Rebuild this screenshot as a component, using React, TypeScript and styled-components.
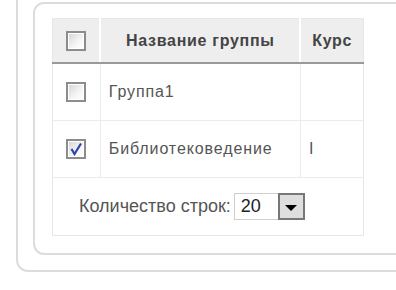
import React from 'react'
import styled, { createGlobalStyle } from 'styled-components'

const GlobalStyle = createGlobalStyle`
  html, body {
    margin: 0;
    padding: 0;
    overflow: hidden;
    background: #ffffff;
    font-family: "Liberation Sans", Arial, sans-serif;
  }
`

const OuterFrame = styled.div`
  width: 600px;
  margin: -20px 0 0 16px;
  padding: 20px 0 15px 15px;
  border: 2px solid #dcdcdc;
  border-radius: 12px;
`

const InnerFrame = styled.div`
  width: 500px;
  padding: 14px 0 17px 17px;
  border: 2px solid #dcdcdc;
  border-radius: 11px;
`

const Table = styled.table`
  width: 312px;
  border-collapse: collapse;
  border: 1px solid #e6e6e6;
  color: #555;
  font-size: 16px;
  letter-spacing: 0.9px;
`

const HeadCell = styled.th<{ $w: number }>`
  width: ${(p) => p.$w}px;
  height: 43px;
  padding: 0;
  background: #eeeeee;
  border-bottom: 2px solid #9a9a9a;
  border-left: 2px solid #ffffff;
  color: #444;
  font-weight: bold;
  letter-spacing: 0.7px;
  text-align: center;
  &:first-child {
    border-left: none;
  }
`

const Cell = styled.td<{ $center?: boolean }>`
  height: 56px;
  padding: 0 0 0 ${(p) => (p.$center ? 0 : 8)}px;
  border-left: 1px solid #ebebeb;
  border-bottom: 1px solid #ebebeb;
  text-align: ${(p) => (p.$center ? 'center' : 'left')};
  &:first-child {
    border-left: none;
  }
`

const FooterCell = styled.td`
  height: 57px;
  padding: 0 0 0 26px;
`

const Pager = styled.div`
  display: flex;
  align-items: center;
  gap: 3px;
  color: #555;
  font-size: 18px;
  letter-spacing: 0;
`

const Box = styled.span`
  display: inline-flex;
  align-items: center;
  justify-content: center;
  width: 16px;
  height: 16px;
  border: 2px solid #8c8c8c;
  background: linear-gradient(135deg, #d4d4d4 0%, #f6f6f6 60%, #ffffff 100%);
  box-shadow: inset 0 0 0 1px #ffffff;
  vertical-align: middle;
`

const SelectBox = styled.div`
  display: flex;
  height: 27px;
`

const SelectValue = styled.span`
  width: 37px;
  padding-left: 6px;
  border: 1px solid #cfcfcf;
  border-right: none;
  display: flex;
  align-items: center;
  color: #222;
  font-size: 18px;
`

const SelectButton = styled.span`
  width: 23px;
  border: 2px solid #777;
  background: #dedede;
  display: flex;
  align-items: center;
  justify-content: center;
  padding-top: 3px;
  box-sizing: content-box;
`

const Check = () => (
  <svg width="14" height="14" viewBox="0 0 14 14">
    <path d="M2.5 7 L5.5 12 L12 1.5" fill="none" stroke="#2a45a8" strokeWidth="2.2" />
  </svg>
)

const Arrow = () => (
  <svg width="12" height="6" viewBox="0 0 12 6">
    <path d="M0 0 H12 L6 6 Z" fill="#000" />
  </svg>
)

const rows = [
  { name: 'Группа1', course: '', checked: false },
  { name: 'Библиотековедение', course: 'I', checked: true },
]

export default function App() {
  return (
    <>
      <GlobalStyle />
      <OuterFrame>
        <InnerFrame>
          <Table>
            <thead>
              <tr>
                <HeadCell $w={48}>
                  <Box />
                </HeadCell>
                <HeadCell $w={200}>Название группы</HeadCell>
                <HeadCell $w={63}>Курс</HeadCell>
              </tr>
            </thead>
            <tbody>
              {rows.map((r) => (
                <tr key={r.name}>
                  <Cell $center>
                    <Box>{r.checked && <Check />}</Box>
                  </Cell>
                  <Cell>{r.name}</Cell>
                  <Cell>{r.course}</Cell>
                </tr>
              ))}
              <tr>
                <FooterCell colSpan={3}>
                  <Pager>
                    Количество строк:
                    <SelectBox>
                      <SelectValue>20</SelectValue>
                      <SelectButton>
                        <Arrow />
                      </SelectButton>
                    </SelectBox>
                  </Pager>
                </FooterCell>
              </tr>
            </tbody>
          </Table>
        </InnerFrame>
      </OuterFrame>
    </>
  )
}
